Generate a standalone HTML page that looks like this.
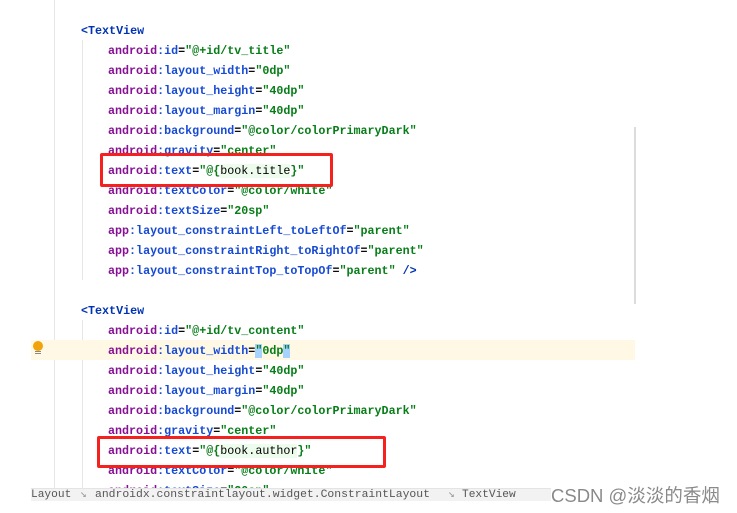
<!DOCTYPE html>
<html><head><meta charset="utf-8"><style>
body{margin:0;width:737px;height:513px;background:#fff;position:relative;overflow:hidden;font-family:"Liberation Mono",monospace}
.l{position:absolute;font-size:11.7px;line-height:20px;height:20px;white-space:pre;color:#080808;font-weight:bold}
.p{color:#871094}.a{color:#174ad4}.v{color:#067d17}.t{color:#0033b3}.k{color:#080808}
.hl{background:#edfcec;color:#000;font-weight:normal}
.sel{background:#a6d2ff}
.box{position:absolute;border:3px solid #f5211f;border-radius:2px;box-sizing:border-box}
#c{position:absolute;left:0;top:1px;width:737px;height:499px;overflow:hidden}
.b{position:absolute;top:-4px;font-size:11.2px;line-height:20px;color:#555;white-space:pre}
</style></head><body>
<div style="position:absolute;left:54px;top:0;width:1px;height:500px;background:#e6e6e6"></div>
<div style="position:absolute;left:82px;top:40px;width:1px;height:240px;background:#e6e6e6"></div>
<div style="position:absolute;left:82px;top:320px;width:1px;height:180px;background:#e6e6e6"></div>
<div style="position:absolute;left:31px;top:340px;width:604px;height:20px;background:#fef8e5"></div>
<div style="position:absolute;left:634px;top:127px;width:2px;height:177px;background:#dcdcdc"></div>
<div style="position:absolute;left:33px;top:341px;width:10px;height:10px;border-radius:50%;background:#f0a30a"></div>
<div style="position:absolute;left:35px;top:351px;width:6px;height:1px;background:#888;box-shadow:0 2px 0 #888"></div>
<div id="c">
<div class="l t" style="left:81px;top:20px">&lt;TextView</div>
<div class="l" style="left:108px;top:40px"><span class="p">android</span><span class="a">:id</span><span class="k">=</span><span class="v">"@+id/tv_title"</span></div>
<div class="l" style="left:108px;top:60px"><span class="p">android</span><span class="a">:layout_width</span><span class="k">=</span><span class="v">"0dp"</span></div>
<div class="l" style="left:108px;top:80px"><span class="p">android</span><span class="a">:layout_height</span><span class="k">=</span><span class="v">"40dp"</span></div>
<div class="l" style="left:108px;top:100px"><span class="p">android</span><span class="a">:layout_margin</span><span class="k">=</span><span class="v">"40dp"</span></div>
<div class="l" style="left:108px;top:120px"><span class="p">android</span><span class="a">:background</span><span class="k">=</span><span class="v">"@color/colorPrimaryDark"</span></div>
<div class="l" style="left:108px;top:140px"><span class="p">android</span><span class="a">:gravity</span><span class="k">=</span><span class="v">"center"</span></div>
<div class="l" style="left:108px;top:160px"><span class="p">android</span><span class="a">:text</span><span class="k">=</span><span class="v">"@{</span><span class="hl">book.title</span><span class="v">}"</span></div>
<div class="l" style="left:108px;top:180px"><span class="p">android</span><span class="a">:textColor</span><span class="k">=</span><span class="v">"@color/white"</span></div>
<div class="l" style="left:108px;top:200px"><span class="p">android</span><span class="a">:textSize</span><span class="k">=</span><span class="v">"20sp"</span></div>
<div class="l" style="left:108px;top:220px"><span class="p">app</span><span class="a">:layout_constraintLeft_toLeftOf</span><span class="k">=</span><span class="v">"parent"</span></div>
<div class="l" style="left:108px;top:240px"><span class="p">app</span><span class="a">:layout_constraintRight_toRightOf</span><span class="k">=</span><span class="v">"parent"</span></div>
<div class="l" style="left:108px;top:260px"><span class="p">app</span><span class="a">:layout_constraintTop_toTopOf</span><span class="k">=</span><span class="v">"parent"</span><span class="t"> /&gt;</span></div>
<div class="l t" style="left:81px;top:300px">&lt;TextView</div>
<div class="l" style="left:108px;top:320px"><span class="p">android</span><span class="a">:id</span><span class="k">=</span><span class="v">"@+id/tv_content"</span></div>
<div class="l" style="left:108px;top:340px"><span class="p">android</span><span class="a">:layout_width</span><span class="k">=</span><span class="v sel">"</span><span class="v">0dp</span><span class="v sel">"</span></div>
<div class="l" style="left:108px;top:360px"><span class="p">android</span><span class="a">:layout_height</span><span class="k">=</span><span class="v">"40dp"</span></div>
<div class="l" style="left:108px;top:380px"><span class="p">android</span><span class="a">:layout_margin</span><span class="k">=</span><span class="v">"40dp"</span></div>
<div class="l" style="left:108px;top:400px"><span class="p">android</span><span class="a">:background</span><span class="k">=</span><span class="v">"@color/colorPrimaryDark"</span></div>
<div class="l" style="left:108px;top:420px"><span class="p">android</span><span class="a">:gravity</span><span class="k">=</span><span class="v">"center"</span></div>
<div class="l" style="left:108px;top:440px"><span class="p">android</span><span class="a">:text</span><span class="k">=</span><span class="v">"@{</span><span class="hl">book.author</span><span class="v">}"</span></div>
<div class="l" style="left:108px;top:460px"><span class="p">android</span><span class="a">:textColor</span><span class="k">=</span><span class="v">"@color/white"</span></div>
<div class="l" style="left:108px;top:480px"><span class="p">android</span><span class="a">:textSize</span><span class="k">=</span><span class="v">"20sp"</span></div>
</div>
<div class="box" style="left:100px;top:153px;width:233px;height:34px"></div>
<div class="box" style="left:97px;top:436px;width:289px;height:32px"></div>

<div style="position:absolute;left:31px;top:488px;width:520px;height:12px;background:#f2f2f2;border-top:1px solid #e4e4e4;overflow:hidden">
<div class="b" style="left:0">Layout</div>
<div class="b" style="left:49px;color:#999">↘</div>
<div class="b" style="left:64px;font-size:11.4px">androidx.constraintlayout.widget.ConstraintLayout</div>
<div class="b" style="left:417px;color:#999">↘</div>
<div class="b" style="left:431px">TextView</div>
</div>
<div style="position:absolute;left:551px;top:482px;font-family:'Liberation Sans','Noto Sans CJK SC',sans-serif;font-size:18.5px;color:#8a8a8a;white-space:nowrap">CSDN @淡淡的香烟</div>
</body></html>
